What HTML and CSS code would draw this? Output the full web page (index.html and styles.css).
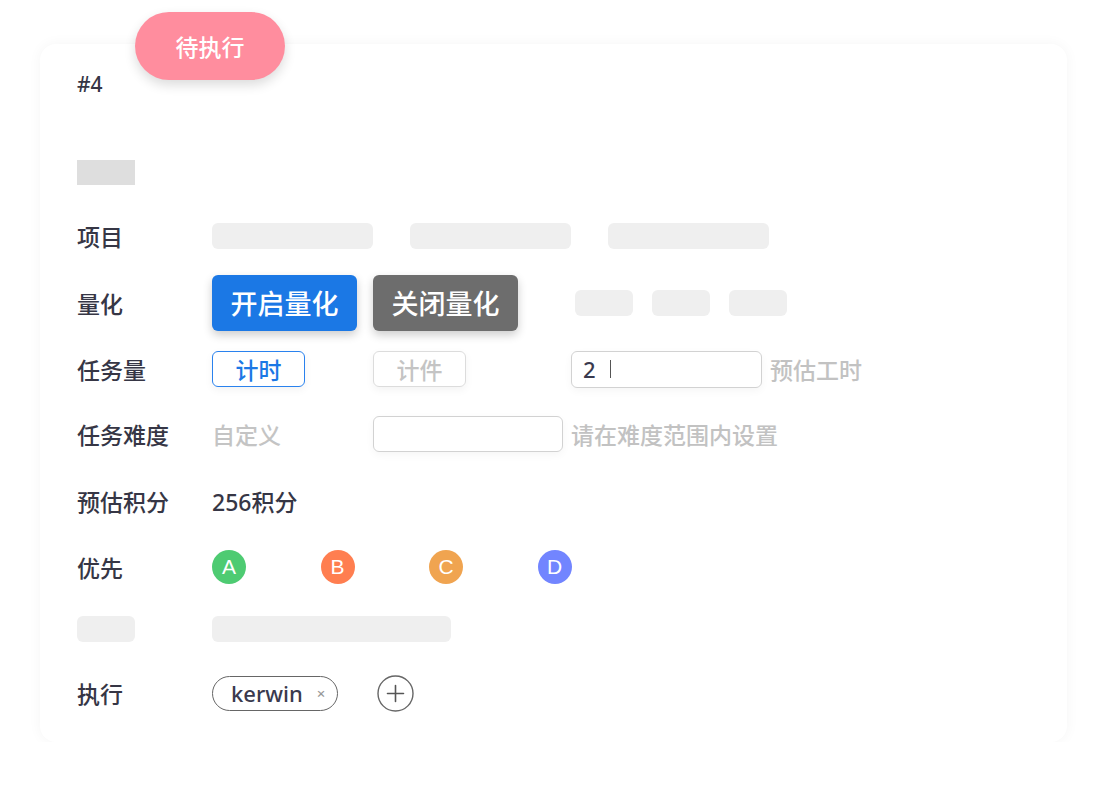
FILE: index.html
```html
<!DOCTYPE html>
<html lang="zh">
<head>
<meta charset="utf-8">
<link rel="stylesheet" href="styles.css">
</head>
<body>
<div class="card">
  <div class="badge">待执行</div>
  <div class="task-no">#4</div>
  <div class="block"></div>
  <div class="form">
    <div class="label">项目</div>
    <div class="value">
      <div class="skel skel-lg"></div>
      <div class="skel skel-lg"></div>
      <div class="skel skel-lg"></div>
    </div>

    <div class="label">量化</div>
    <div class="value">
      <div class="big-btn blue">开启量化</div>
      <div class="big-btn gray">关闭量化</div>
      <div class="mini-group">
        <div class="skel skel-sm"></div>
        <div class="skel skel-sm"></div>
        <div class="skel skel-sm"></div>
      </div>
    </div>

    <div class="label">任务量</div>
    <div class="value cols">
      <div class="cell"><div class="opt active">计时</div></div>
      <div class="cell"><div class="opt">计件</div></div>
      <div class="cell"><div class="input wide">2<span class="caret"></span></div><span class="hint">预估工时</span></div>
    </div>

    <div class="label">任务难度</div>
    <div class="value cols">
      <div class="cell"><span class="muted">自定义</span></div>
      <div class="cell wide-cell"><div class="input mid"></div><span class="hint">请在难度范围内设置</span></div>
    </div>

    <div class="label">预估积分</div>
    <div class="value"><span class="text">256积分</span></div>

    <div class="label">优先</div>
    <div class="value dots">
      <div class="dot a">A</div>
      <div class="dot b">B</div>
      <div class="dot c">C</div>
      <div class="dot d">D</div>
    </div>

    <div class="label"><div class="skel skel-label"></div></div>
    <div class="value"><div class="skel skel-xl"></div></div>

    <div class="label">执行</div>
    <div class="value">
      <div class="tag">kerwin<span class="x">×</span></div>
      <div class="add">
        <svg width="37" height="37" viewBox="0 0 37 37"><circle cx="18.5" cy="18.5" r="17.5" fill="none" stroke="#666" stroke-width="1.4"/><path d="M18.5 10.5v16M10.5 18.5h16" stroke="#555" stroke-width="1.6" stroke-linecap="round"/></svg>
      </div>
    </div>
  </div>
</div>
</body>
</html>
```
FILE: styles.css
```css
html, body {
  margin: 0;
  padding: 0;
  background: #fff;
}
body {
  font-family: "Noto Sans", "Noto Sans CJK SC", sans-serif;
  color: #363645;
  padding: 44px 41px 0 40px;
}
.card {
  position: relative;
  width: 990px;
  height: 673px;
  padding: 25px 0 0 37px;
  background: #fff;
  border-radius: 16px;
  box-shadow: 0 0 14px rgba(0, 0, 0, 0.045);
}
.badge {
  position: absolute;
  left: 95px;
  top: -32px;
  width: 150px;
  height: 68px;
  border-radius: 34px;
  background: #ff8d9e;
  color: #fff;
  font-size: 23px;
  font-weight: 500;
  display: flex;
  align-items: center;
  justify-content: center;
  box-shadow: 0 5px 12px rgba(0, 0, 0, 0.14);
}
.task-no {
  height: 30px;
  line-height: 30px;
  font-size: 21px;
  font-weight: 500;
}
.block {
  margin-top: 61px;
  width: 58px;
  height: 25px;
  background: #dedede;
}
.form {
  margin-top: 18px;
  display: grid;
  grid-template-columns: 135px 1fr;
  grid-template-rows: 66px 67px 66px 64px 69px 63px 62px 66px;
}
.label {
  display: flex;
  align-items: center;
  font-size: 23px;
  font-weight: 500;
}
.value {
  display: flex;
  align-items: center;
}
.skel {
  background: #efefef;
  border-radius: 6px;
  height: 26px;
}
.skel-lg { width: 161px; margin-right: 37px; }
.skel-sm { width: 58px; }
.skel-label { width: 58px; }
.skel-xl { width: 239px; }
.big-btn {
  width: 145px;
  height: 56px;
  border-radius: 6px;
  color: #fff;
  font-size: 27px;
  font-weight: 500;
  display: flex;
  align-items: center;
  justify-content: center;
  box-shadow: 0 4px 10px rgba(0, 0, 0, 0.2);
  margin-right: 16px;
}
.big-btn.blue { background: #1b78e5; }
.big-btn.gray { background: #6d6d6d; }
.mini-group {
  display: flex;
  gap: 19px;
  margin-left: 41px;
}
.cols {
  display: grid;
  grid-template-columns: 161px 198px auto;
}
.cell {
  display: flex;
  align-items: center;
}
.wide-cell { grid-column: 2 / 4; }
.opt {
  box-sizing: border-box;
  width: 93px;
  height: 36px;
  border: 1.5px solid #dcdcdc;
  border-radius: 6px;
  color: #c4c4c4;
  font-size: 23px;
  font-weight: 500;
  display: flex;
  align-items: center;
  justify-content: center;
  box-shadow: 0 3px 8px rgba(0, 0, 0, 0.05);
}
.opt.active {
  border-color: #2a82ee;
  color: #1b78e5;
}
.input {
  box-sizing: border-box;
  height: 37px;
  border: 1.5px solid #d2d2d2;
  border-radius: 6px;
  font-size: 22px;
  font-weight: 500;
  padding-left: 11px;
  display: flex;
  align-items: center;
  color: #3a3a4e;
  box-shadow: 0 3px 8px rgba(0, 0, 0, 0.04);
}
.input.wide { width: 191px; }
.input.mid { width: 190px; height: 36px; }
.caret {
  display: inline-block;
  width: 1.5px;
  height: 18px;
  background: #555;
  margin-left: 14px;
}
.hint {
  color: #c2c2c2;
  font-size: 23px;
  font-weight: 500;
  margin-left: 8px;
}
.muted {
  color: #c4c4c4;
  font-size: 23px;
  font-weight: 500;
}
.text { font-size: 23px; font-weight: 500; }
.dots {
  gap: 74.5px;
}
.dot {
  width: 34px;
  height: 34px;
  border-radius: 50%;
  color: #fff;
  font-family: "Liberation Sans", sans-serif;
  font-size: 21px;
  display: flex;
  align-items: center;
  justify-content: center;
}
.dot.a { background: #4ecb72; }
.dot.b { background: #ff7e50; }
.dot.c { background: #f0a450; }
.dot.d { background: #7285ff; }
.tag {
  box-sizing: border-box;
  width: 126px;
  height: 35px;
  border: 1.5px solid #666;
  border-radius: 18px;
  font-size: 22px;
  font-weight: 500;
  display: flex;
  align-items: center;
  padding-left: 18px;
  color: #3a3a4e;
}
.tag .x {
  font-size: 15px;
  color: #999;
  margin-left: 14px;
}
.add {
  margin-left: 39px;
  width: 37px;
  height: 37px;
}
.add svg { display: block; }
```
